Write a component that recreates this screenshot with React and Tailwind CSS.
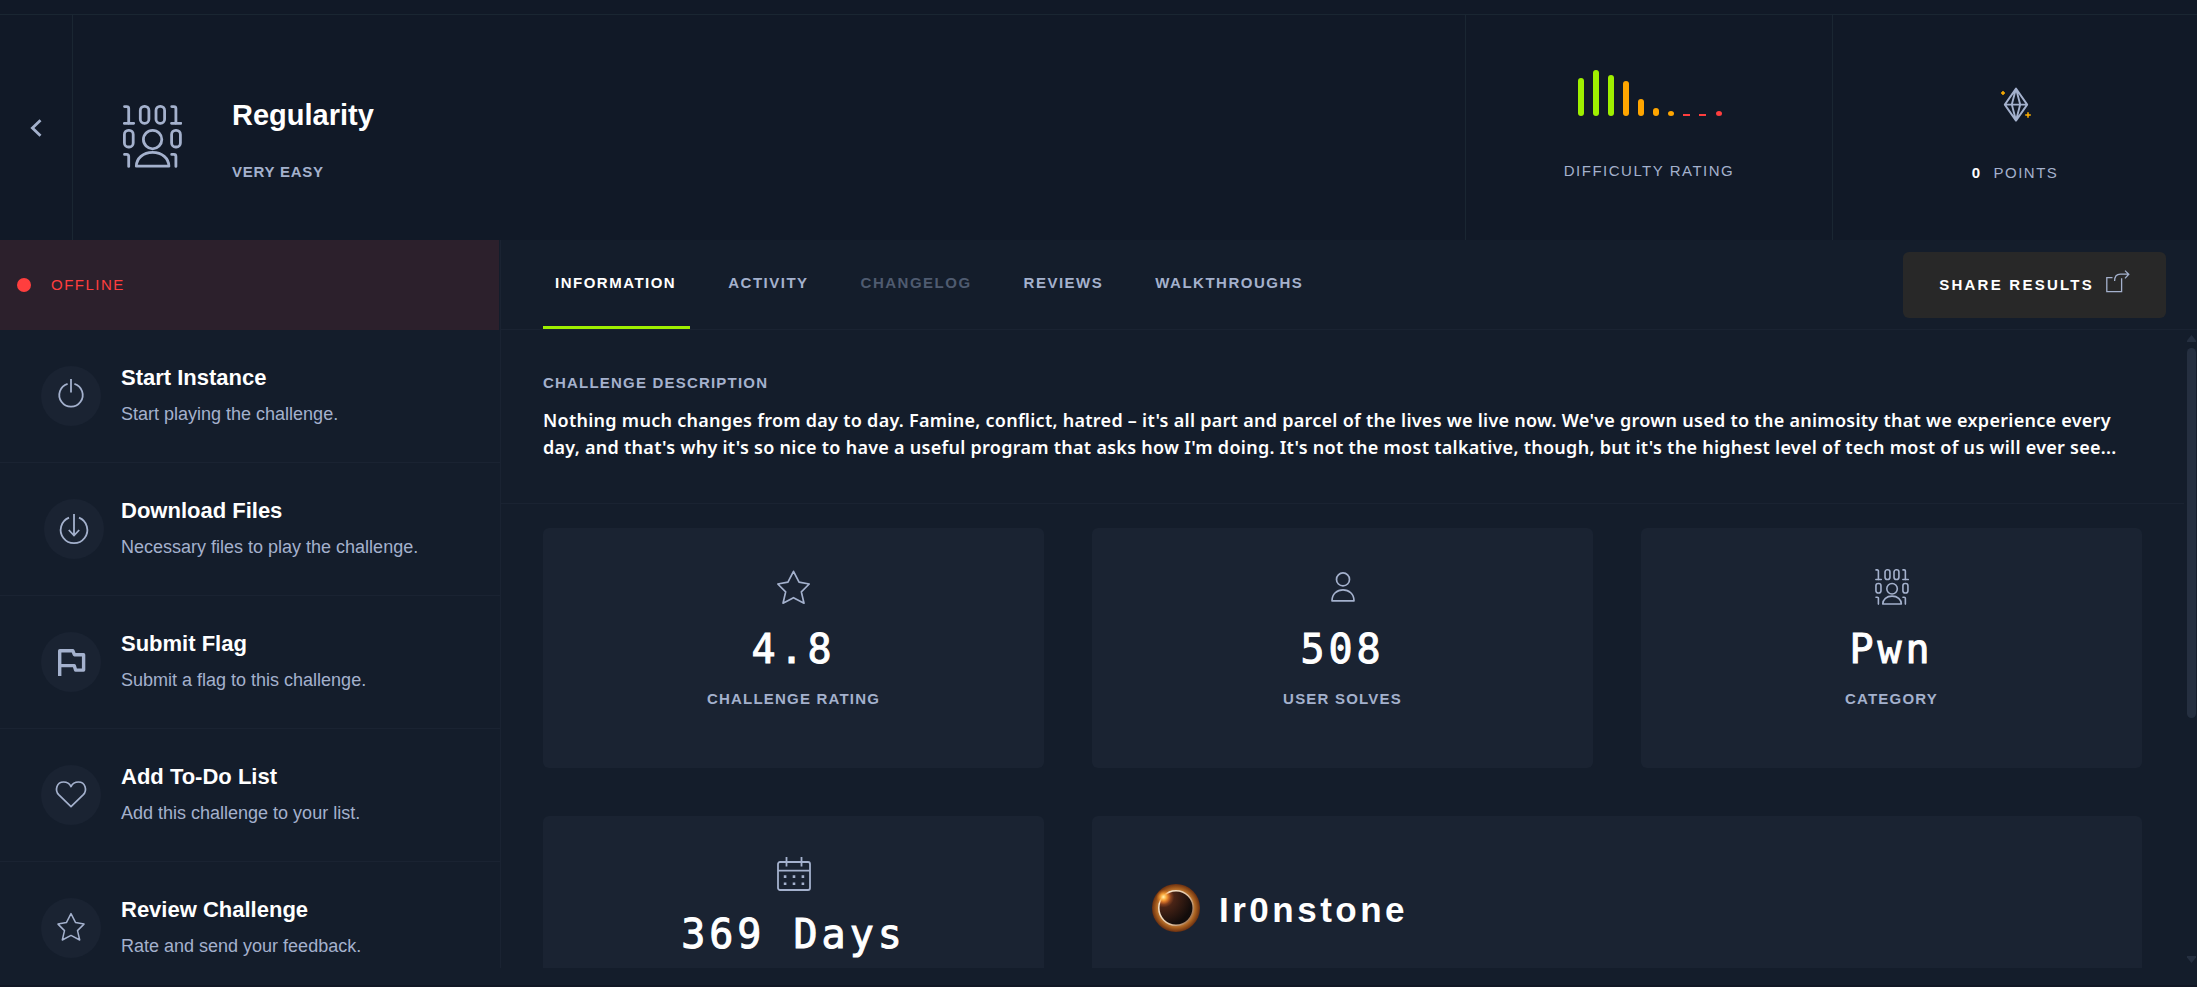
import React from "react";

const SANS = "font-['Liberation_Sans',Arial,sans-serif]";

function BinaryPersonIcon({ className }) {
  return (
    <svg viewBox="0 0 59 63" className={className} fill="none" stroke="currentColor" strokeWidth="2.8" strokeLinecap="round" strokeLinejoin="round" aria-hidden="true">
      <path d="M1.5 1.6h2.2q2 0 2 2v15M1.3 18.3h9.4" />
      <rect x="17.3" y="1.4" width="8.6" height="16.9" rx="4" />
      <rect x="33" y="1.4" width="8.6" height="16.9" rx="4" />
      <path d="M48.7 1.6h2.2q2 0 2 2v15M48.5 18.3h9.4" />
      <rect x="1.4" y="25.4" width="8.8" height="16.6" rx="4" />
      <rect x="48.6" y="25.4" width="8.8" height="16.6" rx="4" />
      <circle cx="29.6" cy="34.6" r="9.2" />
      <path d="M13.3 61.2C13.5 53.5 20 47.4 29.6 47.4S45.7 53.5 45.9 61.2Z" />
      <path d="M1.5 49.4h2.2q2 0 2 2v10M48.7 49.4h2.2q2 0 2 2v10" />
    </svg>
  );
}

const STAR = "M30 15.6L34.6 24.6L43 26.1L36.5 32.6L38.7 42L30 37.4L21.3 42L23.5 32.6L17 26.1L25.4 24.6Z";

function ActionIcon({ name }) {
  const common = { viewBox: "0 0 60 60", className: "size-[60px]", fill: "none", stroke: "currentColor", "aria-hidden": true };
  if (name === "power")
    return (
      <svg {...common} strokeWidth="1.8">
        <path d="M26.6 17.8A11.7 11.7 0 1 0 33.4 17.8M30 13v13.5" />
      </svg>
    );
  if (name === "download")
    return (
      <svg {...common} strokeWidth="1.8">
        <path d="M25 18.6A13.3 13.3 0 1 0 35 18.6M30 15v21.5M24.8 31l5.2 5.5l5.2-5.5" />
      </svg>
    );
  if (name === "flag")
    return (
      <svg {...common} strokeWidth="3.4" strokeLinejoin="round">
        <path d="M18.7 44V18.7H31.8L33.4 22.7H42.6V38.1H34.6L33.2 33.6H18.7" />
      </svg>
    );
  if (name === "heart")
    return (
      <svg {...common} strokeWidth="1.7" strokeLinejoin="round">
        <path d="M30 41.6L17.9 29.9C13.4 25.2 15.6 17 22.6 17C26 17 28.6 18.7 30 21.6C31.4 18.7 34 17 37.4 17C44.4 17 46.6 25.2 42.1 29.9Z" />
      </svg>
    );
  return (
    <svg {...common} strokeWidth="1.5" strokeLinejoin="round">
      <path d={STAR} />
    </svg>
  );
}

function StarIcon() {
  return (
    <svg viewBox="15.5 14.5 29 29" className="size-[35px]" fill="none" stroke="currentColor" strokeWidth="1.4" strokeLinejoin="round" aria-hidden="true">
      <path d={STAR} />
    </svg>
  );
}

function UserIcon() {
  return (
    <svg viewBox="0 0 24 30" className="h-[30px] w-6" fill="none" stroke="currentColor" strokeWidth="1.7" strokeLinejoin="round" aria-hidden="true">
      <circle cx="12" cy="7.4" r="6.5" />
      <path d="M1 28.8C1 22 6 17.8 12 17.8S23 22 23 28.8Z" />
    </svg>
  );
}

function CalendarIcon() {
  return (
    <svg viewBox="0 0 34 34" className="size-[34px]" fill="none" stroke="currentColor" strokeWidth="1.8" aria-hidden="true">
      <rect x="1" y="5" width="32" height="28" rx="2" />
      <path d="M1 13.6h32M9.5 0v9.5M24.5 0v9.5" />
      <path d="M6.8 19.6h2.6M15.7 19.6h2.6M24.6 19.6h2.6M6.8 26.8h2.6M15.7 26.8h2.6M24.6 26.8h2.6" strokeWidth="2.6" />
    </svg>
  );
}

function GemIcon() {
  return (
    <svg viewBox="0 0 30 35" className="ml-0.5 h-[35px] w-[30px]" fill="none" strokeLinejoin="round" aria-hidden="true">
      <path d="M15 1.6L26.2 17.6L15 33.6L3.8 17.6ZM3.8 17.6H26.2M15 1.6L10.8 17.6L15 33.6L19.2 17.6Z" stroke="#a4b1cd" strokeWidth="1.9" />
      <path d="M2 4v4M0 6h4M27 25.2v5.6M24.2 28h5.6" stroke="#ffaf00" strokeWidth="1.5" />
    </svg>
  );
}

function ShareIcon() {
  return (
    <svg viewBox="0 0 24 23" className="mb-1.5 h-[23px] w-6" fill="none" stroke="#a4b1cd" strokeWidth="1.3" aria-hidden="true">
      <path d="M6.5 7.6H.8V21.6H15.6V8.2" />
      <path d="M8.6 11C8.6 6.6 10.4 4.2 14.4 4.2H22.8M19 .6L22.8 4.2L19 8.4" />
    </svg>
  );
}

function Avatar() {
  return (
    <svg viewBox="0 0 48 48" className="size-12" role="img" aria-label="Ir0nstone avatar">
      <defs>
        <radialGradient id="rim" cx="0.5" cy="0.5" r="0.5">
          <stop offset="0.68" stopColor="#c98a4a" />
          <stop offset="0.82" stopColor="#a8601f" />
          <stop offset="1" stopColor="#6a2f10" />
        </radialGradient>
        <radialGradient id="core" cx="0.14" cy="0.18" r="0.85">
          <stop offset="0" stopColor="#ffb45a" />
          <stop offset="0.16" stopColor="#b85a28" />
          <stop offset="0.36" stopColor="#4a2416" />
          <stop offset="1" stopColor="#120c0b" />
        </radialGradient>
        <linearGradient id="ring" x1="0" y1="0.2" x2="1" y2="0.8">
          <stop offset="0" stopColor="#fff0d8" />
          <stop offset="0.6" stopColor="#e2c4a4" />
          <stop offset="1" stopColor="#9a6a44" />
        </linearGradient>
        <radialGradient id="flare" cx="0.5" cy="0.5" r="0.5">
          <stop offset="0" stopColor="#fff3b0" />
          <stop offset="0.4" stopColor="#ffac3c" stopOpacity="0.9" />
          <stop offset="1" stopColor="#e06a14" stopOpacity="0" />
        </radialGradient>
      </defs>
      <circle cx="24" cy="24" r="24" fill="url(#rim)" />
      <circle cx="24" cy="24" r="17.2" fill="url(#core)" stroke="url(#ring)" strokeWidth="1.5" />
      <circle cx="11.5" cy="13" r="7.5" fill="url(#flare)" />
    </svg>
  );
}

const BARS = [
  { x: 2, y: 8, w: 6, color: "#9fef00" },
  { x: 17, y: 0, w: 6, color: "#9fef00" },
  { x: 32, y: 5, w: 6, color: "#9fef00" },
  { x: 47, y: 11, w: 6, color: "#ffa500" },
  { x: 62, y: 29, w: 6, color: "#ffa500" },
  { x: 77, y: 38, w: 6, color: "#ffa500" },
  { x: 92, y: 41, w: 6, color: "#ffa500" },
  { x: 107, y: 44, w: 7, color: "#ff3e3e" },
  { x: 123, y: 44, w: 7, color: "#ff3e3e" },
  { x: 140, y: 41, w: 6, color: "#ff3e3e" },
];

const ACTIONS = [
  { icon: "power", title: "Start Instance", text: "Start playing the challenge." },
  { icon: "download", title: "Download Files", text: "Necessary files to play the challenge." },
  { icon: "flag", title: "Submit Flag", text: "Submit a flag to this challenge." },
  { icon: "heart", title: "Add To-Do List", text: "Add this challenge to your list." },
  { icon: "star", title: "Review Challenge", text: "Rate and send your feedback." },
];

const TABS = [
  { label: "Information", style: "border-[#9fef00] text-white" },
  { label: "Activity", style: "border-transparent text-[#a4b1cd]" },
  { label: "Changelog", style: "border-transparent text-[#4f5b70]", disabled: true },
  { label: "Reviews", style: "border-transparent text-[#a4b1cd]" },
  { label: "Walkthroughs", style: "border-transparent text-[#a4b1cd]" },
];

function StatCard({ icon, value, label, iconBox = "h-10" }) {
  return (
    <article className="flex h-60 flex-col items-center rounded-md bg-[#1a2332] pt-[39px] text-[#a4b1cd]">
      <div className={`flex items-center ${iconBox}`}>{icon}</div>
      <p className="mt-[18px] font-['DejaVu_Sans_Mono',monospace] text-[40px] leading-[48px] tracking-widest text-white [-webkit-text-stroke:1px_white]">{value}</p>
      {label && <h3 className="mt-4 text-[15px] leading-5 font-bold tracking-[0.08em] uppercase">{label}</h3>}
    </article>
  );
}

export default function App() {
  return (
    <div className={`flex h-screen flex-col border-b-2 border-[#111725] bg-[#141d2b] pb-[17px] ${SANS}`}>
      <header className="shrink-0 bg-[#111927] pt-3.5">
        <div className="flex h-[226px] border-t border-[#1a2632]">
          <a href="#challenges" aria-label="Back" className="flex w-[73px] shrink-0 items-center justify-center border-r border-[#1a2632] text-[#a4b1cd]">
            <svg viewBox="0 0 12 18" className="h-[18px] w-3" fill="none" stroke="currentColor" strokeWidth="2.8" aria-hidden="true">
              <path d="M10.5 1.2L2.4 9L10.5 16.8" />
            </svg>
          </a>
          <div className="flex flex-1 items-center gap-[50px] pt-[22px] pl-[50px]">
            <BinaryPersonIcon className="mb-1 h-[63px] w-[59px] text-[#a4b1cd]" />
            <div>
              <h1 className="text-[29px] leading-10 font-bold text-white">Regularity</h1>
              <p className="mt-[27px] text-[15px] leading-5 font-bold tracking-wider text-[#a4b1cd] uppercase">Very Easy</p>
            </div>
          </div>
          <div className="flex w-[367px] flex-col items-center border-l border-[#1a2632] pt-[55px]">
            <svg viewBox="0 0 147 46" className="h-[46px] w-[147px]" aria-hidden="true">
              {BARS.map((b) => (
                <rect key={b.x} x={b.x} y={b.y} width={b.w} height={46 - b.y} rx={46 - b.y > 3 ? 3 : 0} ry={Math.min(3, (46 - b.y) / 2)} fill={b.color} />
              ))}
            </svg>
            <p className="mt-[45px] text-[15px] leading-5 tracking-widest text-[#a4b1cd] uppercase">Difficulty Rating</p>
          </div>
          <div className="flex w-[365px] flex-col items-center border-l border-[#1a2632] pt-[72px]">
            <GemIcon />
            <p className="mt-[41px] flex gap-3 text-[15px] leading-5 tracking-widest text-[#a4b1cd] uppercase">
              <span className="font-bold text-white">0</span>
              <span>Points</span>
            </p>
          </div>
        </div>
      </header>

      <div className="flex min-h-0 flex-1">
        <aside className="w-[501px] shrink-0 overflow-hidden border-r border-[#1a2332]">
          <div className="mr-px flex h-[90px] items-center gap-5 bg-[#2c202c] pl-[17px]">
            <span className="size-3.5 rounded-full bg-[#ff3e3e]" />
            <span className="text-[15px] leading-5 tracking-widest text-[#ff3e3e] uppercase">Offline</span>
          </div>
          {ACTIONS.map((a) => (
            <button key={a.title} type="button" className="flex h-[133px] w-full items-center border-b border-[#1a2332] text-left">
              <span className={`w-[121px] shrink-0 ${a.icon === "download" ? "pl-11" : "pl-[41px]"}`}>
                <span className="block size-[60px] rounded-full bg-[#1a2332] text-[#a4b1cd]">
                  <ActionIcon name={a.icon} />
                </span>
              </span>
              <span className="flex flex-col gap-2.5 pb-0.5">
                <span className="text-[22px] leading-7 font-bold text-white">{a.title}</span>
                <span className="text-lg leading-6 text-[#a4b1cd]">{a.text}</span>
              </span>
            </button>
          ))}
        </aside>

        <main className="flex min-w-0 flex-1 flex-col">
          <div className="flex h-[90px] shrink-0 items-center border-b border-[#1a2332] pr-[31px] pl-[42px]">
            <nav className="flex h-full flex-1 gap-[26px]">
              {TABS.map((t) => (
                <button key={t.label} type="button" disabled={t.disabled} className={`border-b-[3px] pr-3.5 pl-3 text-[15px] leading-5 font-bold tracking-widest uppercase ${t.style}`}>
                  {t.label}
                </button>
              ))}
            </nav>
            <button type="button" className="flex h-[66px] items-center gap-3 rounded-md bg-[#282828] px-9 text-[15px] leading-5 font-bold tracking-[0.15em] text-white uppercase">
              Share Results
              <ShareIcon />
            </button>
          </div>

          <div className="flex min-h-0 flex-1">
            <div className="min-w-0 flex-1 overflow-hidden">
              <section className="border-b border-[#1a2332] px-[42px] pt-[43px] pb-[42px]">
                <h2 className="text-[15px] leading-5 font-bold tracking-[0.08em] text-[#a4b1cd] uppercase">Challenge Description</h2>
                <p className="mt-3.5 font-['Noto_Sans',sans-serif] text-lg leading-[27px] font-semibold tracking-[0.015em] text-white">
                  Nothing much changes from day to day. Famine, conflict, hatred – it's all part and parcel of the lives we live now. We've grown used to the animosity that we experience every day, and that's why it's so nice to have a useful program that asks how I'm doing. It's not the most talkative, though, but it's the highest level of tech most of us will ever see...
                </p>
              </section>
              <section className="grid grid-cols-3 gap-12 px-[42px] pt-6">
                <StatCard icon={<StarIcon />} value="4.8" label="Challenge Rating" />
                <StatCard icon={<UserIcon />} value="508" label="User Solves" />
                <StatCard icon={<BinaryPersonIcon className="h-[36px] w-[34px]" />} value="Pwn" label="Category" />
                <StatCard icon={<CalendarIcon />} iconBox="h-[37px]" value="369 Days" />
                <article className="col-span-2 flex h-60 items-start gap-[19px] rounded-md bg-[#1a2332] pt-[68px] pl-[60px]">
                  <Avatar />
                  <h3 className="text-[35px] leading-[52px] font-bold tracking-widest text-white">Ir0nstone</h3>
                </article>
              </section>
            </div>
            <div className="flex w-[13px] shrink-0 flex-col items-center pt-[5px] pb-[5px] pl-0.5 text-[#252f40]" aria-hidden="true">
              <svg viewBox="0 0 9 7" className="h-[7px] w-[9px]" fill="currentColor"><path d="M4.5 0L9 5.5V7H0V5.5Z" /></svg>
              <span className="mt-1.5 h-[370px] w-[9px] rounded-full bg-[#252f40]" />
              <svg viewBox="0 0 9 7" className="mt-auto h-[7px] w-[9px]" fill="currentColor"><path d="M4.5 7L9 1.5V0H0V1.5Z" /></svg>
            </div>
          </div>
        </main>
      </div>
    </div>
  );
}
